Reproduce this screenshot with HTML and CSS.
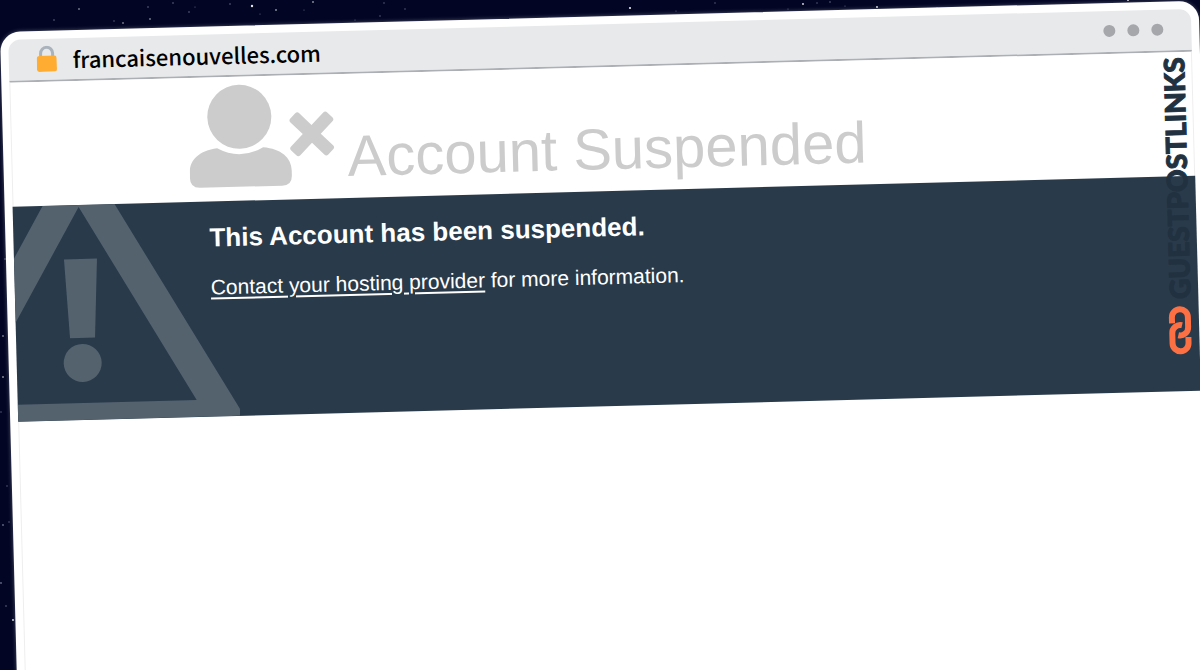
FILE: index.html
```
<!DOCTYPE html>
<html lang="en">
<head>
    <meta charset="UTF-8">
    <meta name="viewport" content="width=device-width, initial-scale=1.0">
    <title>francaisenouvelles.com - Account Suspended</title>
    <link rel="stylesheet" href="styles.css">
</head>
<body>
    <svg class="stars" aria-hidden="true">
        <g fill="#fff" opacity="0.9">
            <circle cx="252" cy="6" r="1.2"/><circle cx="276" cy="10" r="0.8"/><circle cx="313" cy="2" r="0.8"/>
            <circle cx="630" cy="8" r="1.1"/><circle cx="660" cy="17" r="0.9"/><circle cx="803" cy="4" r="0.9"/>
            <circle cx="877" cy="7" r="0.9"/><circle cx="150" cy="19" r="0.7"/><circle cx="123" cy="23" r="0.7"/>
            <circle cx="79" cy="9" r="0.7"/><circle cx="3" cy="377" r="0.8"/><circle cx="3" cy="336" r="0.7"/>
            <circle cx="13" cy="620" r="0.9"/><circle cx="1128" cy="0" r="1"/>
        </g>
        <g fill="#aab0c8" opacity="0.6">
            <circle cx="54" cy="20" r="0.8"/><circle cx="114" cy="21" r="0.7"/><circle cx="148" cy="7" r="0.8"/>
            <circle cx="173" cy="3" r="0.8"/><circle cx="189" cy="12" r="0.8"/><circle cx="195" cy="7" r="0.6"/>
            <circle cx="230" cy="4" r="0.8"/><circle cx="260" cy="14" r="0.6"/><circle cx="304" cy="10" r="0.6"/>
            <circle cx="355" cy="20" r="0.6"/><circle cx="380" cy="16" r="0.7"/><circle cx="384" cy="3" r="0.7"/>
            <circle cx="405" cy="9" r="0.7"/><circle cx="431" cy="28" r="0.7"/><circle cx="549" cy="18" r="0.6"/>
            <circle cx="636" cy="22" r="0.6"/><circle cx="676" cy="11" r="0.6"/><circle cx="703" cy="18" r="0.6"/>
            <circle cx="715" cy="3" r="0.7"/><circle cx="788" cy="9" r="0.6"/><circle cx="817" cy="3" r="0.7"/>
            <circle cx="830" cy="2" r="0.8"/><circle cx="845" cy="6" r="0.6"/><circle cx="937" cy="8" r="0.7"/>
            <circle cx="5" cy="259" r="0.8"/><circle cx="1" cy="412" r="0.7"/><circle cx="7" cy="486" r="0.7"/>
            <circle cx="3" cy="525" r="0.9"/><circle cx="9" cy="522" r="0.7"/><circle cx="1" cy="583" r="0.9"/>
            <circle cx="6" cy="606" r="0.8"/>
        </g>
    </svg>

    <div class="window">
        <div class="address-bar">
            <svg class="lock" viewBox="0 0 20 26" aria-hidden="true">
                <path d="M4 12V7.500a6 6 0 0 1 12 0V12" fill="none" stroke="#aab2bb" stroke-width="3"/>
                <rect x="0" y="10" width="20" height="16" rx="2.500" fill="#ffac33"/>
            </svg>
            <span class="url">francaisenouvelles.com</span>
            <div class="dots"><i></i><i></i><i></i></div>
        </div>

        <div class="page">
            <header class="page-header">
                <svg class="user-icon" viewBox="0 0 146 108" aria-hidden="true">
                    <circle cx="51" cy="34" r="32"/>
                    <path d="M28 65Q51 78 74 65C92 67 102 76 102 89V94Q102 104 92 104H10Q0 104 0 94V89C0 76 10 67 28 65Z"/>
                    <path d="M107 32Q109 30 111 32L123 44L135 32Q137 30 139 32L144 37Q146 39 144 41L132 53L144 65Q146 67 144 69L139 74Q137 76 135 74L123 62L111 74Q109 76 107 74L102 69Q100 67 102 65L114 53L102 41Q100 39 102 37Z"/>
                </svg>
                <h1>Account Suspended</h1>
            </header>

            <main class="notice">
                <svg class="warning" viewBox="0 0 222 215" aria-hidden="true">
                    <path d="M30 0H102L222 208V215H0V198H179L66 2L0 116V52Z"/>
                    <path d="M50 54H83L79 133H54Z"/>
                    <circle cx="66" cy="158" r="19"/>
                </svg>
                <div class="notice-text">
                    <h2>This Account has been suspended.</h2>
                    <p><a href="#">Contact your hosting provider</a> for more information.</p>
                </div>
            </main>
        </div>

        <div class="brand">
            <svg class="chain" viewBox="0 0 24 50" aria-hidden="true">
                <path d="M4 18V12A8 8 0 0 1 20 12V22A8 8 0 0 1 10 30"/>
                <path d="M20 32V38A8 8 0 0 1 4 38V28A8 8 0 0 1 14 20"/>
            </svg>
            <span>GUESTPOSTLINKS</span>
        </div>
    </div>
</body>
</html>
```

FILE: styles.css
```
* {
    box-sizing: border-box;
}
body {
    margin: 0;
    height: 100vh;
    overflow: hidden;
    background-color: #020624;
    font-family: "Liberation Sans", Arial, sans-serif;
}
.stars {
    position: absolute;
    top: 0;
    left: 0;
    width: 100%;
    height: 100%;
}
.window {
    position: relative;
    margin: 32px 1px 0 0;
    min-height: 105vh;
    border: 8px solid #fff;
    border-radius: 20px;
    background-color: #fff;
    box-shadow: 0 0 4px rgba(255, 255, 255, 0.3);
    transform: rotate(-1.5deg);
    transform-origin: 0 0;
}
.address-bar {
    display: flex;
    align-items: center;
    gap: 16px;
    height: 43px;
    padding: 0 28px 2px;
    background-color: #e7e9eb;
    border-bottom: 2px solid #acafb4;
    border-radius: 12px 12px 0 0;
}
.lock {
    width: 20px;
    height: 26px;
}
.url {
    color: #000;
    font-family: "Noto Sans CJK SC", "Noto Sans", sans-serif;
    font-size: 22px;
    font-weight: 500;
    line-height: 36px;
}
.dots {
    display: flex;
    gap: 12px;
    margin-left: auto;
}
.dots i {
    width: 12px;
    height: 12px;
    border-radius: 50%;
    background-color: #a5a7ab;
}
.page {
    border-left: 1px solid #eee;
    border-right: 1px solid #eee;
    min-height: 90vh;
}
.page-header {
    display: flex;
    align-items: flex-end;
    gap: 12px;
    height: 124px;
    padding: 0 15% 10px;
    color: #ccc;
}
.user-icon {
    width: 146px;
    height: 108px;
    fill: #ccc;
}
h1 {
    margin: 0;
    font-size: 58px;
    font-weight: normal;
    line-height: 64px;
}
.notice {
    display: grid;
    min-height: 215px;
    margin: 0 -1px;
    background-color: #293a4a;
    color: #fff;
}
.warning {
    grid-area: 1 / 1;
    width: 222px;
    height: 215px;
    fill: #54626e;
}
.notice-text {
    grid-area: 1 / 1;
    padding: 20px 196px;
}
h2 {
    margin: 0 0 20px;
    font-size: 26px;
    line-height: 32px;
}
p {
    margin: 0;
    font-size: 21px;
    line-height: 28px;
}
a {
    color: #fff;
    text-underline-offset: 3px;
}
.brand {
    position: absolute;
    top: 48px;
    right: 7px;
    display: flex;
    flex-direction: column-reverse;
    align-items: center;
    gap: 6px;
    width: 24px;
    color: #213140;
    font-family: Lato, sans-serif;
    font-size: 28px;
    font-weight: 900;
    line-height: 28px;
}
.brand span {
    writing-mode: vertical-rl;
    transform: rotate(180deg);
    -webkit-text-stroke: 1px #213140;
}
.chain {
    width: 24px;
    height: 50px;
    fill: none;
    stroke: #fd7044;
    stroke-width: 6;
}
```
